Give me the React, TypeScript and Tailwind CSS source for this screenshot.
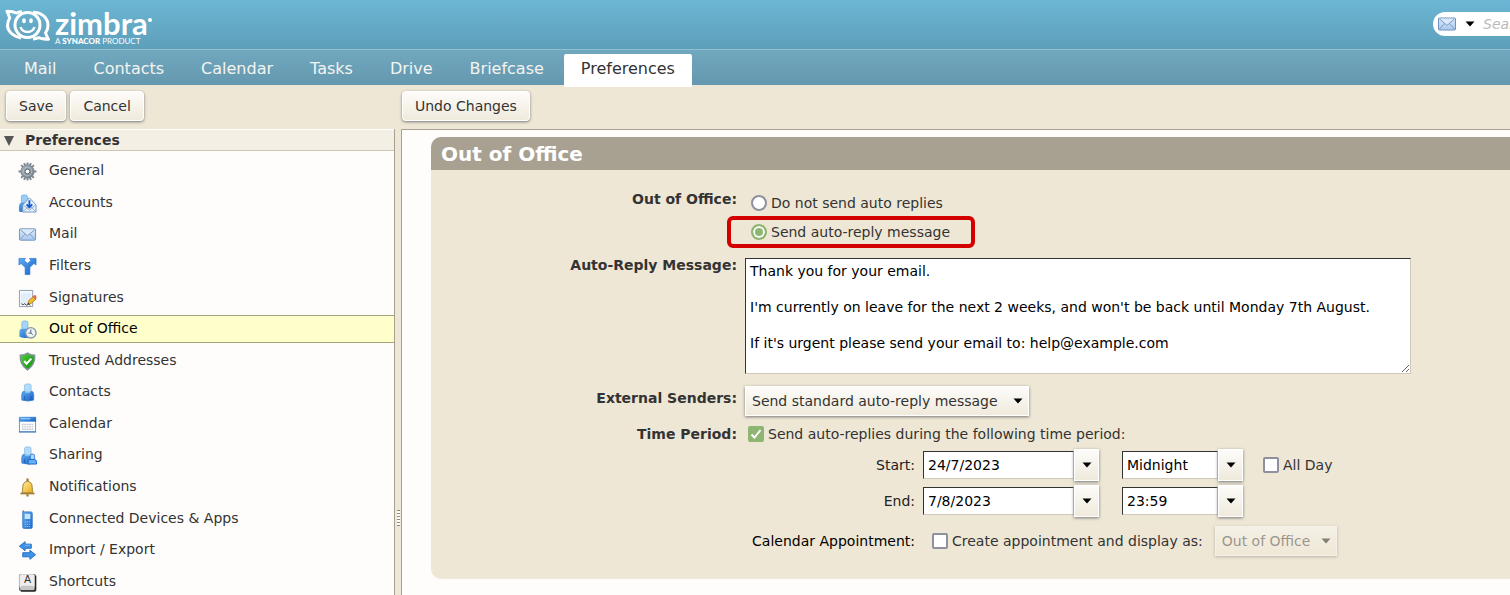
import React, { useState } from 'react';
import clsx from 'clsx';

const tabs = ['Mail', 'Contacts', 'Calendar', 'Tasks', 'Drive', 'Briefcase', 'Preferences'];

const Gradients = () => (
  <svg className="absolute h-0 w-0" aria-hidden="true">
    <defs>
      <linearGradient id="blue" x1="0" y1="0" x2="1" y2="1">
        <stop offset="0" stopColor="#62acf2" />
        <stop offset="1" stopColor="#1560c4" />
      </linearGradient>
      <linearGradient id="pale" x1="0" y1="0" x2="0" y2="1">
        <stop offset="0" stopColor="#dceafa" />
        <stop offset="1" stopColor="#a9c8ec" />
      </linearGradient>
      <linearGradient id="steel" x1="0" y1="0" x2="1" y2="1">
        <stop offset="0" stopColor="#aab4be" />
        <stop offset="1" stopColor="#717c88" />
      </linearGradient>
      <linearGradient id="gold" x1="0" y1="0" x2="1" y2="1">
        <stop offset="0" stopColor="#fff0a0" />
        <stop offset="1" stopColor="#e8a912" />
      </linearGradient>
      <linearGradient id="green" x1="0" y1="0" x2="1" y2="1">
        <stop offset="0" stopColor="#51d33d" />
        <stop offset="1" stopColor="#07890c" />
      </linearGradient>
    </defs>
  </svg>
);

const Envelope = () => (
  <g>
    <rect x="1.5" y="4" width="17" height="12" rx="1" fill="url(#pale)" stroke="#6f92bd" />
    <path d="M2.5 5 10 11.500l7.500-6.500M2.500 15 7.500 9.500M17.500 15 12.500 9.500" fill="none" stroke="#7c9cc4" />
    <path d="M3.500 4.700h13L10 10.200Z" fill="#dbe9fa" />
  </g>
);

const Person = () => (
  <g>
    <path d="M4 18v-5.500Q4 8.500 7 8.500h6.500q3 0 3 4V18q-6 2-12.500 0Z" fill="url(#blue)" stroke="#3a7cc8" strokeWidth=".8" />
    <path d="M7 18v-4.500M13.700 18v-4.500" stroke="#1557ac" strokeWidth=".8" />
    <rect x="6.800" y="1" width="7" height="8.500" rx="2" fill="#b3dcfb" stroke="#7fb6e4" strokeWidth=".7" />
    <path d="M7.500 9.500q3 2 5.500 0" fill="none" stroke="#91cbfb" />
  </g>
);

const icons: Record<string, React.ReactNode> = {
  General: (
    <g>
      <path
        d="M10 .5v19M.5 10h19M3.300 3.300l13.400 13.400M16.700 3.300 3.300 16.700M6.400 1.200l7.200 17.600M13.600 1.200 6.400 18.800"
        stroke="#7c8792" strokeWidth="2"
      />
      <circle cx="10" cy="10" r="7" fill="url(#steel)" stroke="#7b8691" />
      <circle cx="10" cy="10" r="4.500" fill="none" stroke="#b3bdc6" />
      <circle cx="10" cy="10" r="2.500" fill="#fefdfb" stroke="#5d6874" />
    </g>
  ),
  Accounts: (
    <g>
      <rect x="3.500" y="1" width="6.500" height="9" rx="2" fill="#9accf5" stroke="#6aa8df" strokeWidth=".7" />
      <path d="M1 18v-5q0-4 4-4h5v10H3q-2 0-2-1Z" fill="url(#blue)" />
      <path d="M5 11.500 12 4l7 7.500V19H5Z" fill="#e7f1fb" stroke="#7196bf" />
      <path d="M6 12l6 5 6-5M5.500 18.500l5-5M18.500 18.500l-5-5" fill="none" stroke="#8daccf" />
      <path d="M12 6.500v7M9 11l3 3 3-3" fill="none" stroke="#145bd0" strokeWidth="2" />
    </g>
  ),
  Mail: <Envelope />,
  Filters: (
    <path
      d="M1 1.500h7L6.400 3.600 10 6.800l3.600-3.200L12 1.500h7v7l-2.100-1.700-4.400 4V18.500h-5v-7.700l-4.400-4L1 8.500Z"
      fill="url(#blue)" stroke="#2876d8" strokeWidth=".7"
    />
  ),
  Signatures: (
    <g>
      <path d="M1.500 1.500h14v17h-14Z" fill="#f5faff" stroke="#8a9bad" />
      <path d="M3 4h11v11H3Z" fill="#e1edf8" />
      <path d="m3.500 15.500 2 1 1.500-1 2 1.500 2-1 2 1" fill="none" stroke="#333" />
      <path d="M10 16.500 11.500 12l5-4.500 2.500 3-5 4.500Z" fill="#f3bd22" stroke="#9e721a" strokeWidth=".8" />
      <path d="m15.500 8.200 1.700-1.700q2-.5 2.300 2.500L18 11Z" fill="#e86752" />
      <path d="m10 16.500.7-2 1.300 1.200Z" fill="#222" />
    </g>
  ),
  'Out of Office': (
    <g>
      <path d="M1.500 17.500v-5Q1.500 9 5 9h6q3 0 3 3v6q-7 2-12.500-.5Z" fill="url(#blue)" />
      <rect x="4" y="1" width="6.500" height="8.500" rx="2" fill="#a5d5fa" stroke="#70abd9" strokeWidth=".7" />
      <circle cx="13.500" cy="13.500" r="5.500" fill="#eff3f8" stroke="#8799ad" strokeWidth="1.500" />
      <path d="M13.500 10v3.800h-2.500M13.500 13.500l2 2" fill="none" stroke="#53606f" />
    </g>
  ),
  'Trusted Addresses': (
    <g>
      <path d="M10 1.200q3 2.300 7.500 2.300.8 9.500-7.500 15.300Q1.700 13 2.500 3.500 7 3.500 10 1.200Z" fill="url(#green)" stroke="#829498" strokeWidth="1.600" />
      <path d="m6.500 9.500 2.500 2.800 5-5.300" fill="none" stroke="#fff" strokeWidth="2.200" />
    </g>
  ),
  Contacts: <Person />,
  Calendar: (
    <g>
      <rect x="1.500" y="2.500" width="17" height="15" fill="#fff" stroke="#5d94d5" />
      <path d="M1 2h18v5H1Z" fill="url(#blue)" />
      <path d="M3 4h10" stroke="#b4dcff" />
      <path d="M4 10h12M4 12.500h12M4 15h12" stroke="#c6cad4" strokeWidth="1.500" strokeDasharray="2 .6" />
      <path d="M1 18h18" stroke="#4279c2" />
    </g>
  ),
  Sharing: (
    <g>
      <Person />
      <rect x="13" y="8.500" width="4.500" height="6" rx="2" fill="#acd8fa" stroke="#3a83cf" />
      <path d="M10.500 19v-2q0-2.800 2.500-2.800h4q2.500 0 2.500 2.800v2Z" fill="#68b0f5" stroke="#1765c4" />
    </g>
  ),
  Notifications: (
    <g stroke="#a4803a">
      <path d="M10 .5v3.500M10 17v2.500" strokeWidth="2.500" />
      <path d="M4 15.500q1-1.500 1-5.500 0-6 5-6.500 5 .5 5 6.500 0 4 1 5.500Z" fill="url(#gold)" />
      <path d="M2.500 16.500h15" strokeWidth="1.500" />
    </g>
  ),
  'Connected Devices & Apps': (
    <g>
      <path d="M5.500 .5v3" stroke="#566f94" strokeWidth="1.500" />
      <rect x="5" y="2" width="10" height="17.500" rx="1.500" fill="url(#blue)" stroke="#4385cb" />
      <rect x="7" y="4" width="6" height="5.500" fill="#c2e5fb" />
      <path d="M7 12.500h6M7 15h6M7 17.500h6" stroke="#a9cdf5" strokeDasharray="1.500 .7" />
    </g>
  ),
  'Import / Export': (
    <g fill="#3d93ea" stroke="#1c64b8" strokeWidth=".9">
      <path d="M1.500 5.500 7.500 .7v2.600H14v4.400H7.500v2.600Z" />
      <path d="M18.500 14.500 12.500 9.700v2.600H5v4.400h7.500v2.600Z" />
      <path d="M7 4.500h6" stroke="#7ac0ff" />
    </g>
  ),
  Shortcuts: (
    <g>
      <rect x="1" y="1" width="18" height="18" rx="2" fill="#777" />
      <path d="M18.500 3v14q0 2-2 2H3" fill="none" stroke="#222" strokeWidth="1.500" />
      <rect x="1.500" y="1.200" width="16" height="14.500" rx="2" fill="#ededed" />
      <path d="m2 15.500 2-2h11.500l2 2-1 2.500H3Z" fill="#c6c6c6" />
      <text x="10" y="11" textAnchor="middle" fontSize="11" fontFamily="DejaVu Sans" fill="#333">A</text>
    </g>
  ),
};

const Icon = ({ name }: { name: string }) => (
  <svg viewBox="0 0 20 20" className="mt-[3px] size-[19px] shrink-0" aria-hidden="true">{icons[name]}</svg>
);

const Caret = ({ className }: { className?: string }) => (
  <svg viewBox="0 0 10 6" className={clsx('h-[6px] w-[10px] shrink-0', className)} aria-hidden="true">
    <path d="M.5 .5h9L5 5.500Z" fill="currentColor" />
  </svg>
);

const Logo = () => (
  <a href="#" aria-label="Zimbra home" className="flex items-start gap-1 text-white">
    <svg viewBox="0 0 46 34" className="h-[34px] w-[46px]" fill="none" stroke="#fff" strokeWidth="3" strokeLinejoin="round" aria-hidden="true">
      <path d="M16 30C8 28.500 2.500 23 2.500 17.500c0-3 1-5.500 2.200-7.500-1-2.500-1.400-4.500-2.700-6.800 3.500 0 7 .5 9.500 1.800C13.500 4 15 3.800 17 3.800" />
      <ellipse cx="22.500" cy="17" rx="12.500" ry="12.500" />
      <path d="M28 4.300c9 0 15 6 15 13 0 3-1 5.500-2.500 7.500 1 2.500 1.600 4.500 3 6.500-3.500 0-7-.3-9.500-1.600-2 .8-4 1.200-6 1.200" />
      <path d="M15.500 19c2 6.500 12 6.500 14 0" strokeWidth="2.500" />
      <path d="M19 12v1.500M26 12v1.500" strokeWidth="3.500" strokeLinecap="round" />
    </svg>
    <span className="flex flex-col pt-px font-[Lato,sans-serif]">
      <span className="flex items-start text-[31px] leading-[28px] font-bold">
        zimbra
        <i className="mt-[9px] size-1 rounded-full bg-white" />
      </span>
      <span className="text-[8px] leading-[8px] whitespace-nowrap">A <b className="font-black">SYNACOR</b> PRODUCT</span>
    </span>
  </a>
);

const buttonStyle =
  'flex items-center border border-white bg-linear-to-b from-[#fdfcfa] to-[#f0eadc] text-[#333] shadow-[0_1px_3px_#777]';

const Button = ({ children }: { children: React.ReactNode }) => (
  <button type="button" className={clsx(buttonStyle, 'h-[30px] rounded-[4px] px-3 text-[14px]')}>{children}</button>
);

const checkStyle = 'col-start-1 row-start-1 size-4 appearance-none rounded-[2px] border-2 border-[#8f8f9d] bg-white checked:border-[#8fb573] checked:bg-[#8fb573]';

const Check = ({ label, defaultChecked }: { label: string; defaultChecked?: boolean }) => {
  const [checked, setChecked] = useState(!!defaultChecked);
  return (
    <label className="flex items-center gap-1 whitespace-nowrap">
      <span className="grid size-4 place-items-center">
        <input type="checkbox" className={checkStyle} checked={checked} onChange={() => setChecked(!checked)} />
        {checked && (
          <svg viewBox="0 0 16 16" className="pointer-events-none col-start-1 row-start-1 size-4" aria-hidden="true">
            <path d="m3.500 8.500 3 3 6-7.500" fill="none" stroke="#fff" strokeWidth="2" />
          </svg>
        )}
      </span>
      {label}
    </label>
  );
};

const Radio = ({ label, defaultChecked }: { label: string; defaultChecked?: boolean }) => (
  <label className="flex items-center gap-1 whitespace-nowrap">
    <input
      type="radio"
      name="ooo"
      defaultChecked={defaultChecked}
      className="size-4 appearance-none rounded-full border-2 border-[#8f8f9d] bg-white checked:border-[#8fb573] checked:bg-[#8fb573] checked:shadow-[inset_0_0_0_2px_#fff]"
    />
    {label}
  </label>
);

const fieldStyle = 'border border-t-[#333] border-l-[#333] border-r-[#d0c9ba] border-b-[#d0c9ba] bg-white px-1 text-[14px] text-black';

const Combo = ({ id, value, label, width }: { id: string; value: string; label: string; width: string }) => (
  <div className="flex items-center">
    <input id={id} aria-label={label} defaultValue={value} className={clsx(fieldStyle, 'h-7', width)} />
    <button type="button" aria-label={`Choose ${label}`} className={clsx(buttonStyle, 'h-8 w-[25px] justify-center text-black')}>
      <Caret />
    </button>
  </div>
);

const Select = ({ id, label, options, disabled, width }: { id: string; label: string; options: string[]; disabled?: boolean; width: string }) => (
  <div className={clsx('grid items-center', width, disabled && 'opacity-45')}>
    <select
      id={id}
      aria-label={label}
      disabled={disabled}
      className={clsx(buttonStyle, 'col-start-1 row-start-1 h-[30px] w-full appearance-none pl-[6px] text-[14px]')}
    >
      {options.map((o) => <option key={o}>{o}</option>)}
    </select>
    <Caret className="pointer-events-none col-start-1 row-start-1 mr-[6px] justify-self-end text-black" />
  </div>
);

const message = `Thank you for your email.

I'm currently on leave for the next 2 weeks, and won't be back until Monday 7th August.

If it's urgent please send your email to: help@example.com`;

const labelStyle = 'text-right font-bold';

export default function App() {
  const [page, setPage] = useState('Out of Office');

  return (
    <div className="flex h-screen min-h-[595px] flex-col overflow-hidden bg-[#efe7d5] font-['DejaVu_Sans',sans-serif] text-[14px] leading-[18px] text-[#333]">
      <Gradients />
      <header className="flex h-[50px] shrink-0 items-start justify-between border-b border-[#91bfd1] bg-linear-to-b from-[#6cb6d5] to-[#5d9fba] pl-[5px]">
        <div className="pt-2"><Logo /></div>
        {/* search box runs off the right edge */}
        <div className="w-[77px] overflow-hidden pt-3">
          <div className="flex h-6 w-[260px] items-center rounded-full bg-white pl-1">
            <svg viewBox="0 0 20 20" className="size-5" aria-hidden="true"><Envelope /></svg>
            <button type="button" aria-label="Search type" className="ml-2 text-black"><Caret /></button>
            <input aria-label="Search" placeholder="Search" className="ml-2 w-[180px] italic outline-none placeholder:text-[#bbb]" />
          </div>
        </div>
      </header>

      <nav className="flex h-[35px] shrink-0 items-start gap-[3px] bg-linear-to-b from-[#70a8bf] to-[#6598ae] px-[7px] pt-1 text-base">
        {tabs.map((t) => (
          <a
            key={t}
            href="#"
            className={clsx(
              'flex h-[33px] shrink-0 items-center px-[17px] pb-[3px]',
              t === 'Preferences' ? 'relative rounded-t-[2px] bg-white text-[#333]' : 'text-[#f4f4f0]'
            )}
          >
            {t}
          </a>
        ))}
      </nav>

      <div className="flex min-h-0 flex-1">
        <aside className="flex w-[395px] shrink-0 flex-col">
          <div className="flex h-11 shrink-0 items-start gap-1 px-[6px] pt-[6px]">
            <Button>Save</Button>
            <Button>Cancel</Button>
          </div>
          <div className="flex min-h-0 flex-1 flex-col border-r border-[#a8a091] bg-[#fefdfb]">
            <h2 className="flex h-[22px] shrink-0 items-center gap-[11px] border-t border-b border-t-white border-b-[#cfc7b5] bg-[#f4efe5] pb-px pl-1 font-bold">
              <svg viewBox="0 0 10 10" className="mt-[3px] size-[10px]" aria-hidden="true"><path d="M0 0h10L5 10Z" fill="#555" /></svg>
              Preferences
            </h2>
            <ul className="grid h-[446px] shrink-0 auto-rows-fr pt-1">
              {Object.keys(icons).map((name) => (
                <li key={name} className="flex items-center">
                  <button
                    type="button"
                    onClick={() => setPage(name)}
                    className={clsx(
                      'flex h-7 w-full items-center gap-3 border-y pb-px pl-[18px]',
                      page === name ? 'border-[#a5a57a] bg-[#ffffcc] text-black' : 'border-transparent'
                    )}
                  >
                    <Icon name={name} />
                    {name}
                  </button>
                </li>
              ))}
            </ul>
          </div>
        </aside>

        <div className="flex w-[6px] shrink-0 flex-col items-center pt-[425px]">
          <span className="h-4 w-[3px] bg-[repeating-linear-gradient(to_bottom,#888_0_1px,#fff_1px_3px)]" />
        </div>

        <main className="flex min-w-0 flex-1 flex-col">
          <div className="flex h-11 shrink-0 items-start px-px pt-[6px]">
            <Button>Undo Changes</Button>
          </div>
          <div className="min-h-0 flex-1 overflow-hidden border-t border-l border-[#a8a091] bg-[#fefdfb] pt-[7px] pl-[29px]">
            <section className="rounded-l-[10px] bg-[#efe7d5]">
              <h1 className="flex h-[33px] items-center rounded-tl-[10px] bg-[#a8a091] px-[10px] text-[20px] font-bold text-white">
                Out of Office
              </h1>
              <form className="grid grid-cols-[306px_1fr] gap-x-2 pt-5 pb-4">
                <div className={labelStyle} id="ooo-label">Out of Office:</div>
                <div role="radiogroup" aria-labelledby="ooo-label" className="flex flex-col gap-[11px] pt-1 pl-[6px]">
                  <Radio label="Do not send auto replies" />
                  <div className="relative">
                    <Radio label="Send auto-reply message" defaultChecked />
                    <div className="pointer-events-none absolute -inset-y-[7px] -left-6 w-[248px] rounded-[6px] border-4 border-[#d40000]" />
                  </div>
                </div>

                <label htmlFor="message" className={clsx(labelStyle, 'pt-[15px]')}>Auto-Reply Message:</label>
                <textarea
                  id="message"
                  defaultValue={message}
                  className={clsx(fieldStyle, 'mt-[17px] h-[116px] w-[666px] py-[3px]')}
                />

                <label htmlFor="external" className={clsx(labelStyle, 'pt-[15px]')}>External Senders:</label>
                <div className="pt-3">
                  <Select id="external" label="External Senders" width="w-[284px]" options={['Send standard auto-reply message', 'Send custom message', 'Do not send']} />
                </div>

                <div className={clsx(labelStyle, 'pt-[9px]')}>Time Period:</div>
                <div className="pt-[9px] pl-[3px]">
                  <Check label="Send auto-replies during the following time period:" defaultChecked />
                </div>

                <div className="col-start-2 grid grid-cols-[170px_1fr] items-center gap-x-2 pt-1">
                  <label htmlFor="start" className="text-right text-[#222]">Start:</label>
                  <div className="flex h-9 items-center">
                    <Combo id="start" label="Start date" value="24/7/2023" width="w-[151px]" />
                    <div className="w-[23px]" />
                    <Combo id="start-time" label="Start time" value="Midnight" width="w-[96px]" />
                    <div className="w-5" />
                    <Check label="All Day" />
                  </div>
                  <label htmlFor="end" className="text-right text-[#222]">End:</label>
                  <div className="flex h-9 items-center">
                    <Combo id="end" label="End date" value="7/8/2023" width="w-[151px]" />
                    <div className="w-[23px]" />
                    <Combo id="end-time" label="End time" value="23:59" width="w-[96px]" />
                  </div>
                  <div className="text-right whitespace-nowrap text-black">Calendar Appointment:</div>
                  <div className="flex h-11 items-center gap-3 pl-[9px]">
                    <Check label="Create appointment and display as:" />
                    <Select id="show-as" label="Display as" disabled width="w-[122px]" options={['Out of Office', 'Busy']} />
                  </div>
                </div>
              </form>
            </section>
          </div>
        </main>
      </div>
    </div>
  );
}
